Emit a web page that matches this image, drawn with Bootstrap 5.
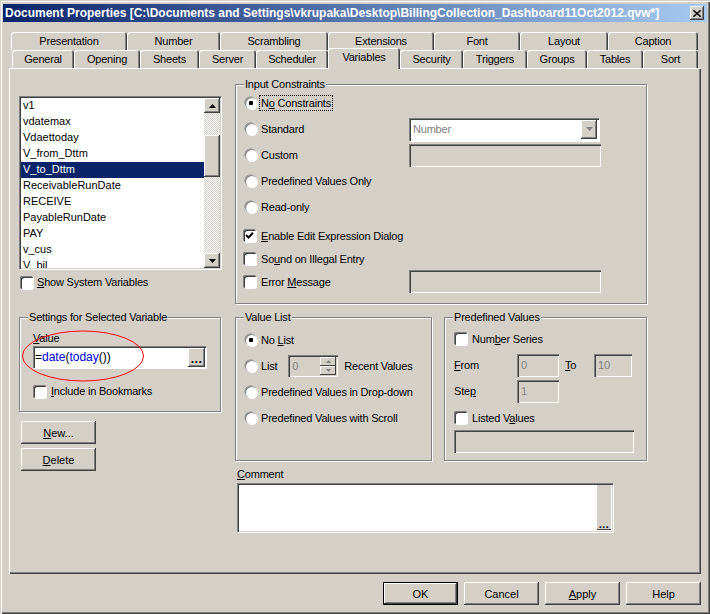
<!DOCTYPE html>
<html lang="en"><head><meta charset="utf-8"><title>Document Properties</title>
<link href="https://cdn.jsdelivr.net/npm/bootstrap@5.3.0/dist/css/bootstrap.min.css" rel="stylesheet">
<style>
html,body{width:710px;height:614px;overflow:hidden;margin:0}
body{background:#d4d0c8;font:11px/14px "Liberation Sans",Arial,sans-serif;letter-spacing:-.2px;color:#000;--w:#d4d0c8}
.dlg{width:710px;height:614px;padding:3px 3px 0;box-shadow:inset 1px 1px 0 var(--w),inset 2px 2px 0 #fff,inset -1px -1px 0 #404040,inset -2px -2px 0 #808080;display:flex;flex-direction:column}
.ttl{height:18px;margin-top:1px;flex:none;background:linear-gradient(90deg,#0a246a,#a6caf0);color:#fff;font:700 12px/16px "Liberation Sans",sans-serif;padding-left:2px;letter-spacing:0;align-items:center;white-space:nowrap}
.xbtn{width:14px;height:14px;margin:0 3px 0 auto;background:#d4d0c8;box-shadow:inset -1px -1px #404040,inset 1px 1px #fff,inset -2px -2px #808080;display:flex;align-items:center;justify-content:center;flex:none}
.tabs{margin:0;padding:0;list-style:none;display:flex;flex-wrap:nowrap;align-items:flex-end;height:18px;flex:none;border:0}
.t1{margin:10px 0 0 8px}.t2{margin-left:9px;position:relative;z-index:2}
.tabs .nav-link{display:block;height:18px;padding:2px 0 0;text-align:center;color:#000;background:#d4d0c8;border:0;border-radius:3px 3px 0 0;box-shadow:inset 1px 1px 0 #fff,inset -1px 0 0 #404040,inset -2px 0 0 #808080;line-height:15px}
.t1 li:nth-child(1){width:116px}.t1 li:nth-child(2){width:93px}.t1 li:nth-child(3){width:108px}.t1 li:nth-child(4){width:106px}.t1 li:nth-child(5){width:86px}.t1 li:nth-child(6){width:88px}.t1 li:nth-child(7){width:90px}
.t2 li:nth-child(1){width:62px}.t2 li:nth-child(2){width:66px}.t2 li:nth-child(3){width:59px}.t2 li:nth-child(4){width:57px}.t2 li:nth-child(5){width:72px}.t2 li:nth-child(6){width:72px}.t2 li:nth-child(7){width:63px}.t2 li:nth-child(8){width:64px}.t2 li:nth-child(9){width:60px}.t2 li:nth-child(10){width:56px}.t2 li:nth-child(11){width:55px}
.tabs .nav-link.active{height:21px;margin-bottom:-1px;background:#d4d0c8;color:#000;box-shadow:inset 1px 1px 0 #fff,inset -1px 0 0 #404040,inset -2px 0 0 #808080}
.pnl{margin-left:6px;width:692px;height:506px;flex:none;box-shadow:inset 1px 1px 0 #fff,inset -1px -1px 0 #404040,inset -2px -2px 0 #808080;display:flex;gap:14px;padding-left:10px}
.lft{width:202px;flex:none;padding-top:28px}
.rgt{width:412px;flex:none;padding-top:16px}
.grp{position:relative;border:1px solid #808080;box-shadow:1px 1px 0 #fff,inset 1px 1px 0 #fff}
.lgd{position:absolute;left:8px;top:-8px;background:#d4d0c8;padding:0 1px;white-space:nowrap}
.lbox{height:173px;padding:2px 1px 1px 2px;display:flex;box-shadow:inset 1px 1px #808080,inset 2px 2px #404040,1px 1px 0 #fff,inset -1px -1px #d4d0c8;background:#fff;letter-spacing:0}
.items{flex:1;overflow:hidden;margin:0;padding:0;list-style:none}
.items li{height:16px;line-height:15px;padding-left:2px}
.items .sel{background:#0a246a;color:#fff}
.sbar{width:16px;background:repeating-conic-gradient(#fff 0 25%,#d4d0c8 0 50%) 0 0/2px 2px;display:flex;flex-direction:column;justify-content:space-between;position:relative}
.raised{background:#d4d0c8;box-shadow:inset -1px -1px #404040,inset 1px 1px #fff,inset -2px -2px #808080;display:flex;align-items:center;justify-content:center}
.sb{height:15px;flex:none}
.thm{position:absolute;left:0;top:37px;width:16px;height:42px}
.cline{display:flex;align-items:center;gap:5px}
.inp-chk,.inp-rad{appearance:none;margin:0!important;flex:none;float:none!important;border:0;background-color:#fff;background-image:none}
.inp-chk{width:13px;height:13px;border-radius:0;box-shadow:inset 1px 1px #808080,inset 2px 2px #404040,1px 1px 0 #fff}
.inp-chk:checked{background-color:#fff;background-image:url("data:image/svg+xml,%3Csvg xmlns='http://www.w3.org/2000/svg' viewBox='0 0 13 13'%3E%3Cpath d='M3 6l2.5 2.5L10 3.8' fill='none' stroke='%23000' stroke-width='2'/%3E%3C/svg%3E");background-size:13px 13px}
.inp-rad{width:12px;height:12px;border-radius:50%;margin-left:2px!important;box-shadow:inset 1px 1px #808080,-.5px -.5px 0 #808080,1px 1px 0 #fff}
.inp-rad:checked{background-color:#fff;background-image:radial-gradient(circle,#000 0 2px,transparent 2.5px);background-size:12px 12px}
.form-check-input:focus{box-shadow:inset 1px 1px #808080,inset 2px 2px #404040,1px 1px 0 #fff;outline:0}
.show{margin:6px 0 0 1px;gap:4px}
.g-set{height:95px;margin-top:28px;padding:13px 14px 0 13px}
.sunk{background:#d4d0c8;border:0;border-radius:0;padding:0 0 0 4px;color:#808080;font:inherit;line-height:inherit;box-shadow:inset 1px 1px #808080,inset 2px 2px #404040,inset -1px -1px #fff,inset -2px -2px #d4d0c8}
.sunk:disabled{background:#d4d0c8;color:#808080;opacity:1}
.valbox{height:22px;width:173px;margin-top:1px;background:#fff;color:#000;display:flex;align-items:center;padding:2px 1px 2px 2px;box-shadow:inset 1px 1px #808080,inset 2px 2px #404040,1px 1px 0 #fff;position:relative;font-size:12px;letter-spacing:0}
.valbox .txt{flex:1;white-space:nowrap;padding-left:0}
.kw{color:#0000e0}
.dots{width:17px;height:19px;font-weight:700;line-height:22px;letter-spacing:.5px;align-items:flex-start}
.oval{position:absolute;left:1px;top:11px;pointer-events:none}
.incl{margin-top:16px}
.winbtn{border:0;border-radius:0;padding:0;background:#d4d0c8;color:#000;font:inherit;box-shadow:inset -1px -1px #404040,inset 1px 1px #fff,inset -2px -2px #808080}
.winbtn:hover,.winbtn:active{background:#d4d0c8!important;color:#000!important}
.lb1{display:block;width:75px;height:23px;margin:0 0 4px 2px}
.first{margin-top:9px}
.g-inp{height:220px;padding:5px 0 0 7px}
.rw{height:26px;display:flex;align-items:center;gap:4px;white-space:nowrap}
.rw2{height:23px;display:flex;align-items:center;gap:5px;white-space:nowrap}
.focus{outline:1px dotted #000;padding:0 1px;margin-left:-1px}
.tb{width:192px;height:23px;margin:0 45px 0 auto}
.sel-b{background:#fff;color:#808080;display:flex;align-items:center;box-shadow:inset 1px 1px #808080,inset 2px 2px #404040,1px 1px 0 #fff;padding:2px 2px 2px 4px;margin-right:47px;width:190px}
.sel-b .rbtn{margin-left:auto;width:16px;height:19px}
.split{display:flex;gap:12px;margin-top:13px}
.g-val{width:197px;height:144px;padding:9px 0 0 7px}
.g-pre{width:203px;height:144px;padding:9px 0 0 9px}
.spn{width:50px;height:22px;margin:0 2px 0 7px;display:flex;padding:2px}
.spn span{flex:1;padding-left:2px;line-height:18px}
.spb{width:16px;display:flex;flex-direction:column}
.spb i{flex:1;display:flex;align-items:center;justify-content:center;background:#d4d0c8;box-shadow:inset -1px -1px #404040,inset 1px 1px #fff}
.pgrid{display:grid;grid-template-columns:63px 42px 35px 38px;grid-auto-rows:26px;align-items:center;margin-top:2px}
.pgrid label{margin:0;padding-left:0}
.pgrid .toL{padding-left:6px}
.sm{height:23px;width:100%}
.lis{margin-top:2px}
.lst{width:180px;height:23px;margin-top:1px;display:block}
.cmt{margin-left:2px;margin-top:6px}
.cbox{width:376px;height:49px;margin:2px 0 0 2px;background:#fff;display:flex;justify-content:flex-end;padding:2px;box-shadow:inset 1px 1px #808080,inset 2px 2px #404040,1px 1px 0 #fff,inset -1px -1px #d4d0c8}
.cdot{width:14px;background:#d4d0c8;display:flex;align-items:flex-end;justify-content:center;font-weight:700;box-shadow:inset 0 -1px #404040;line-height:12px;letter-spacing:.5px}
.foot{display:flex;justify-content:flex-end;gap:6px;margin-top:8px;padding-right:6px}
.foot .winbtn{width:75px;height:23px}
.foot .ok{outline:1px solid #000;outline-offset:-1px;box-shadow:inset -2px -2px #404040,inset 2px 2px #fff,inset -3px -3px #808080}
u{text-underline-offset:1px}
</style></head><body>
<div class="dlg">
 <div class="ttl d-flex"><span>Document Properties [C:\Documents and Settings\vkrupaka\Desktop\BillingCollection_Dashboard11Oct2012.qvw*]</span>
  <span class="xbtn"><svg width="8" height="7" viewBox="0 0 8 7"><path d="M0 0l8 7M8 0L0 7" stroke="#000" stroke-width="1.4"/></svg></span></div>
 <ul class="nav tabs t1">
  <li><a class="nav-link" href="#">Presentation</a></li><li><a class="nav-link" href="#">Number</a></li><li><a class="nav-link" href="#">Scrambling</a></li><li><a class="nav-link" href="#">Extensions</a></li><li><a class="nav-link" href="#">Font</a></li><li><a class="nav-link" href="#">Layout</a></li><li><a class="nav-link" href="#">Caption</a></li>
 </ul>
 <ul class="nav tabs t2">
  <li><a class="nav-link" href="#">General</a></li><li><a class="nav-link" href="#">Opening</a></li><li><a class="nav-link" href="#">Sheets</a></li><li><a class="nav-link" href="#">Server</a></li><li><a class="nav-link" href="#">Scheduler</a></li><li><a class="nav-link active" href="#">Variables</a></li><li><a class="nav-link" href="#">Security</a></li><li><a class="nav-link" href="#">Triggers</a></li><li><a class="nav-link" href="#">Groups</a></li><li><a class="nav-link" href="#">Tables</a></li><li><a class="nav-link" href="#">Sort</a></li>
 </ul>
 <div class="pnl">
  <div class="lft">
   <div class="lbox">
    <ul class="items"><li>v1</li><li>vdatemax</li><li>Vdaettoday</li><li>V_from_Dttm</li><li class="sel">V_to_Dttm</li><li>ReceivableRunDate</li><li>RECEIVE</li><li>PayableRunDate</li><li>PAY</li><li>v_cus</li><li>V_bil</li></ul>
    <div class="sbar">
     <div class="raised sb"><svg width="7" height="4" viewBox="0 0 7 4"><path d="M3.5 0L7 4H0z"/></svg></div>
     <div class="raised thm"></div>
     <div class="raised sb"><svg width="7" height="4" viewBox="0 0 7 4"><path d="M0 0h7L3.5 4z"/></svg></div>
    </div>
   </div>
   <label class="cline show"><input class="form-check-input inp-chk" type="checkbox"><span><u>S</u>how System Variables</span></label>
   <div class="grp g-set">
    <span class="lgd">Settings for Selected Variable</span>
    <label class="d-block m-0"><u>V</u>alue</label>
    <div class="valbox"><span class="txt">=<span class="kw">date</span>(<span class="kw">today</span>())</span><span class="raised dots">...</span></div>
    <label class="cline incl"><input class="form-check-input inp-chk" type="checkbox"><span><u>I</u>nclude in Bookmarks</span></label>
    <svg class="oval" width="126" height="54" viewBox="0 0 126 54"><ellipse cx="62" cy="27" rx="60.5" ry="25" fill="none" stroke="#f00"/></svg>
   </div>
   <button class="btn winbtn lb1 first" type="button"><u>N</u>ew...</button>
   <button class="btn winbtn lb1" type="button"><u>D</u>elete</button>
  </div>
  <div class="rgt">
   <div class="grp g-inp">
    <span class="lgd">Input Constraints</span>
    <div class="rw"><input class="form-check-input inp-rad" type="radio" name="a" checked><span class="focus">N<u>o</u> Constraints</span></div>
    <div class="rw"><input class="form-check-input inp-rad" type="radio" name="a"><span>Standard</span><div class="tb sel-b">Number<span class="raised rbtn"><svg width="7" height="4" viewBox="0 0 7 4"><path d="M0 0h7L3.5 4z" fill="#808080"/></svg></span></div></div>
    <div class="rw"><input class="form-check-input inp-rad" type="radio" name="a"><span>Custom</span><input class="sunk tb" disabled></div>
    <div class="rw"><input class="form-check-input inp-rad" type="radio" name="a"><span>Predefined Values Only</span></div>
    <div class="rw"><input class="form-check-input inp-rad" type="radio" name="a"><span>Read-only</span></div>
    <div class="rw2 mt-1"><input class="form-check-input inp-chk" type="checkbox" checked><span><u>E</u>nable Edit Expression Dialog</span></div>
    <div class="rw2"><input class="form-check-input inp-chk" type="checkbox"><span>So<u>u</u>nd on Illegal Entry</span></div>
    <div class="rw2"><input class="form-check-input inp-chk" type="checkbox"><span>Error <u>M</u>essage</span><input class="sunk tb" disabled></div>
   </div>
   <div class="split">
    <div class="grp g-val">
     <span class="lgd">Value List</span>
     <div class="rw"><input class="form-check-input inp-rad" type="radio" name="b" checked><span>No <u>L</u>ist</span></div>
     <div class="rw"><input class="form-check-input inp-rad" type="radio" name="b"><span>List</span><div class="sunk spn"><span>0</span><div class="spb"><i><svg width="5" height="3" viewBox="0 0 5 3"><path d="M2.5 0L5 3H0z" fill="#808080"/></svg></i><i><svg width="5" height="3" viewBox="0 0 5 3"><path d="M0 0h5L2.5 3z" fill="#808080"/></svg></i></div></div><span>Recent Values</span></div>
     <div class="rw"><input class="form-check-input inp-rad" type="radio" name="b"><span>Predefined Values in Drop-down</span></div>
     <div class="rw"><input class="form-check-input inp-rad" type="radio" name="b"><span>Predefined Values with Scroll</span></div>
    </div>
    <div class="grp g-pre">
     <span class="lgd">Predefined Values</span>
     <div class="rw2"><input class="form-check-input inp-chk" type="checkbox"><span>Num<u>b</u>er Series</span></div>
     <div class="pgrid">
      <label><u>F</u>rom</label><input class="sunk sm" disabled value="0"><label class="toL"><u>T</u>o</label><input class="sunk sm" disabled value="10">
      <label>Ste<u>p</u></label><input class="sunk sm" disabled value="1">
     </div>
     <div class="rw2 lis"><input class="form-check-input inp-chk" type="checkbox"><span>Listed V<u>a</u>lues</span></div>
     <input class="sunk lst" disabled>
    </div>
   </div>
   <div class="cmt"><u>C</u>omment</div>
   <div class="cbox"><span class="cdot">...</span></div>
  </div>
 </div>
 <div class="foot">
  <button class="btn winbtn ok" type="button">OK</button><button class="btn winbtn" type="button">Cancel</button><button class="btn winbtn" type="button"><u>A</u>pply</button><button class="btn winbtn" type="button">Help</button>
 </div>
</div>
<script src="https://cdn.jsdelivr.net/npm/bootstrap@5.3.0/dist/js/bootstrap.bundle.min.js"></script>
</body></html>
